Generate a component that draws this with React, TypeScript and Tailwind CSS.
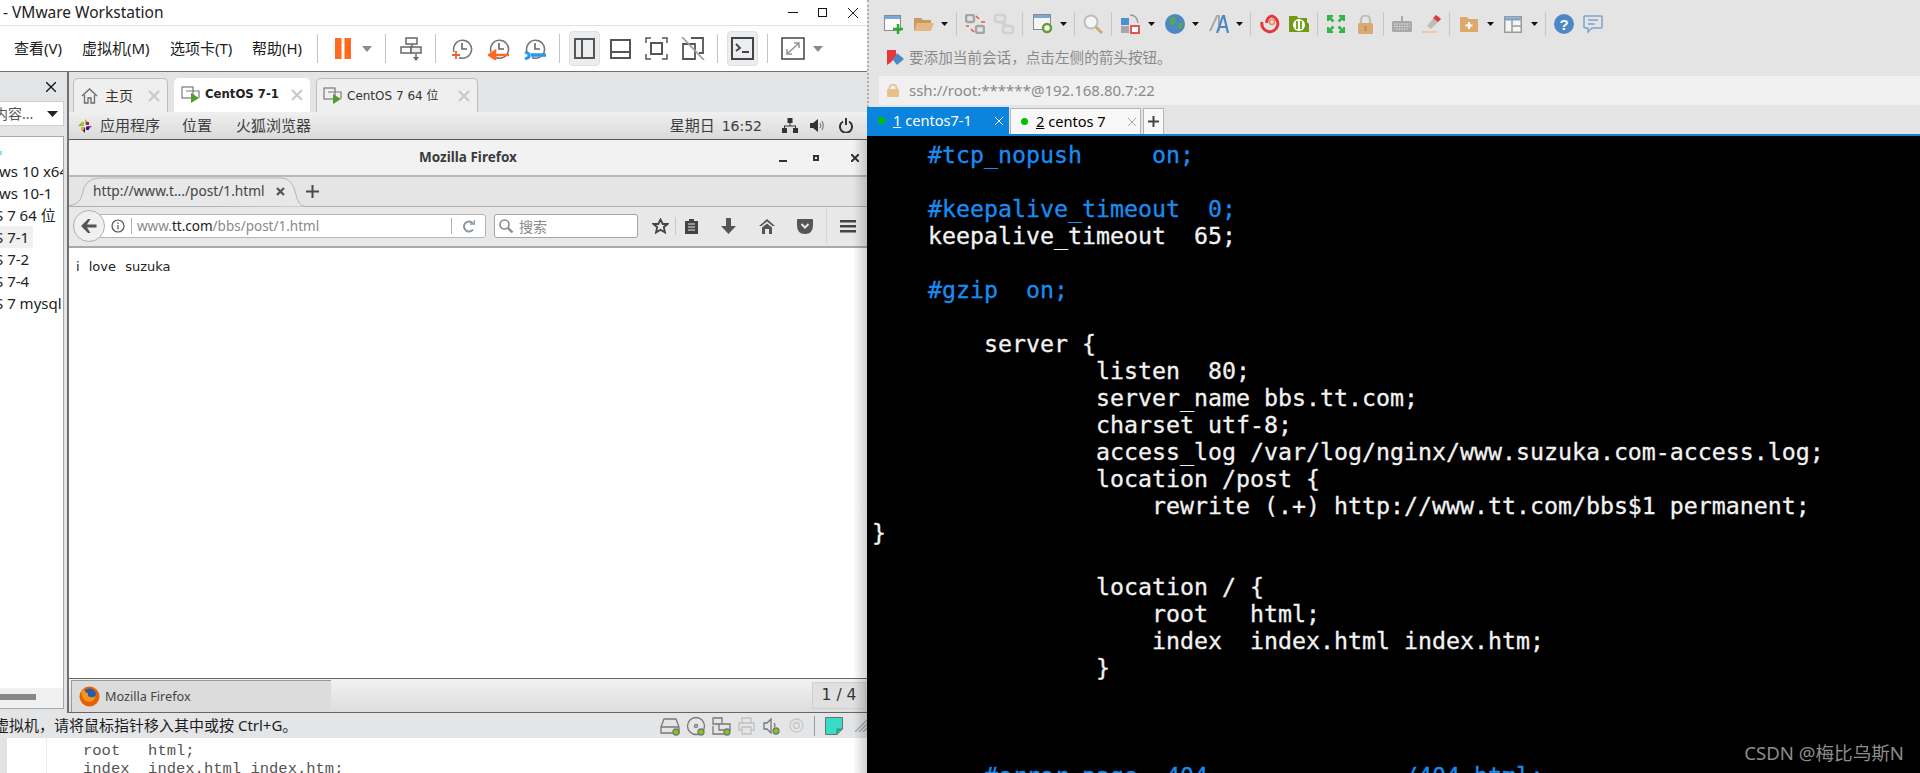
import React from "react";

const Sep = ({ c = "" }: { c?: string }) => <div className={`w-px h-[29px] bg-[#c4c4c4] shrink-0 ${c}`} />;
const RSep = ({ c = "" }: { c?: string }) => <div className={`w-px h-[24px] bg-[#c6c6c6] shrink-0 ${c}`} />;
const Caret = ({ c = "" }: { c?: string }) => (
  <svg width="10" height="6" className={`shrink-0 ${c}`}><path d="M0 0H10L5 6Z" fill="#8a8a8a" /></svg>
);
const DCaret = ({ c = "" }: { c?: string }) => (
  <svg width="7" height="4" className={`shrink-0 ${c}`}><path d="M0 0H7L3.5 4Z" fill="#111" /></svg>
);
const TabX = () => (
  <svg width="12" height="12" stroke="#c8c8c8" strokeWidth="2" className="shrink-0"><path d="M1 1L11 11M11 1L1 11" /></svg>
);
const Clock = ({ c = "", children }: { c?: string; children?: React.ReactNode }) => (
  <svg width="22" height="22" viewBox="0 0 22 22" fill="none" className={`shrink-0 ${c}`}>
    <path d="M3 14A9 9 0 1 1 8 19.500" stroke="#777" strokeWidth="1.6" />
    <path d="M11 5V11H16" stroke="#666" strokeWidth="1.6" />
    {children}
  </svg>
);
const Dot = ({ x, y }: { x: number; y: number }) => <circle cx={x} cy={y} r="3" fill="#7ccb0c" />;

const Code = [
  ["    ", "#tcp_nopush     on;"],
  [],
  ["    ", "#keepalive_timeout  0;"],
  ["    keepalive_timeout  65;"],
  [],
  ["    ", "#gzip  on;"],
  [],
  ["        server {"],
  ["                listen  80;"],
  ["                server_name bbs.tt.com;"],
  ["                charset utf-8;"],
  ["                access_log /var/log/nginx/www.suzuka.com-access.log;"],
  ["                location /post {"],
  ["                    rewrite (.+) http://www.tt.com/bbs$1 permanent;"],
  ["}"],
  [],
  ["                location / {"],
  ["                    root   html;"],
  ["                    index  index.html index.htm;"],
  ["                }"],
  [],
  [],
  [],
  ["        ", "#error_page  404              /404.html;"],
];

const tree = [
  { t: "ws 10 x64", m: "-ml-[1px]" },
  { t: "ws 10-1", m: "-ml-[1px]" },
  { t: "S 7 64 位", m: "-ml-[5px]" },
  { t: "S 7-1", m: "-ml-[5px]", active: true },
  { t: "S 7-2", m: "-ml-[5px]" },
  { t: "S 7-4", m: "-ml-[5px]" },
  { t: "S 7 mysql", m: "-ml-[5px]" },
];

function LeftToolbar() {
  return (
    <div className="h-[46px] border-b border-[#6f6f6f] flex items-center pl-[14px] bg-white text-[15px] text-[#1c1c1c] shrink-0">
      <div className="w-[68px]">查看(V)</div>
      <div className="w-[88px]">虚拟机(M)</div>
      <div className="w-[82px]">选项卡(T)</div>
      <div className="w-[65px]">帮助(H)</div>
      <Sep />
      <svg width="16" height="21" className="ml-[17px] shrink-0"><rect width="6.500" height="21" fill="#ff6a1f" /><rect x="9.500" width="6.500" height="21" fill="#ff6a1f" /></svg>
      <Caret c="ml-[11px]" />
      <Sep c="ml-[13px]" />
      <svg width="22" height="24" viewBox="0 0 22 24" fill="none" stroke="#666" strokeWidth="1.500" className="ml-[14px] shrink-0">
        <rect x="6" y="1" width="11" height="6" /><rect x="1" y="10" width="10" height="6" /><rect x="11" y="10" width="10" height="6" fill="#eee" />
        <path d="M12 7V10" /><path d="M16 17V21" /><path d="M13 20H19L16 24Z" fill="#666" stroke="none" />
      </svg>
      <Sep c="ml-[13px]" />
      <Clock c="ml-[15px]"><path d="M5 13V21M1 17H9" stroke="#f0622a" strokeWidth="1.800" /></Clock>
      <Clock c="ml-[15px]"><path d="M21 17H7M7 13L1 17L7 21Z" stroke="#ff6a1f" strokeWidth="2.500" fill="#ff6a1f" /></Clock>
      <Clock c="ml-[14px]"><path d="M22 17H7" stroke="#2a97e8" strokeWidth="3.500" /><path d="M1 14L5 16V19L1 21" stroke="#2a97e8" strokeWidth="3" /></Clock>
      <Sep c="ml-[13px]" />
      <div className="ml-[9px] w-[31px] h-[35px] bg-[#ecedef] border border-[#dfe0e2] rounded-[4px] flex items-center justify-center shrink-0">
        <svg width="21" height="21" fill="none" stroke="#555" strokeWidth="2"><rect x="1" y="1" width="19" height="19" /><path d="M8 1V20" /></svg>
      </div>
      <svg width="21" height="20" fill="none" stroke="#555" strokeWidth="2" className="ml-[10px] shrink-0"><rect x="1" y="1" width="19" height="18" /><path d="M1 13H20" /></svg>
      <svg width="23" height="23" fill="none" stroke="#555" strokeWidth="1.500" className="ml-[14px] shrink-0"><path d="M1 6V1H6M17 1H22V6M22 17V22H17M6 22H1V17" /><rect x="6" y="6" width="11" height="11" strokeWidth="2" /></svg>
      <svg width="24" height="23" fill="none" stroke="#555" strokeWidth="1.800" className="ml-[13px] shrink-0"><path d="M10 1H22V16H18M2 7H14V22H2Z" /><path d="M1 0L23 23" stroke="#9aa0a6" /></svg>
      <Sep c="ml-[12px]" />
      <div className="ml-[9px] w-[31px] h-[35px] bg-[#ecedef] border border-[#dfe0e2] rounded-[4px] flex items-center justify-center shrink-0">
        <svg width="23" height="23" fill="none" stroke="#444" strokeWidth="2"><rect x="1" y="1" width="21" height="21" /><path d="M5 7L9 11L5 14M11 15H18" strokeWidth="1.800" /></svg>
      </div>
      <Sep c="ml-[9px]" />
      <svg width="24" height="23" fill="none" stroke="#444" strokeWidth="1.500" className="ml-[13px] shrink-0"><rect x="1" y="1" width="22" height="21" /><path d="M6 17L18 6M13 6H18V11M6 12V17H11" stroke="#8a96a0" /></svg>
      <Caret c="ml-[8px]" />
    </div>
  );
}

function VmTabs() {
  return (
    <div className="h-[40px] bg-[#e3e4e6] pt-[6px] pl-[4px] flex shrink-0">
      <div className="w-[95px] h-[34px] rounded-t-[5px] border border-b-0 border-[#bdbdbd] bg-[#efefef] flex items-center pl-[7px]">
        <svg width="17" height="16" fill="none" stroke="#6b6b6b" strokeWidth="1.300" className="shrink-0"><path d="M1 8L8.500 1L16 8M3.500 7V15H7V10H10V15H13.500V7" /></svg>
        <span className="ml-[7px] text-[14px] text-[#333] w-[43px]">主页</span>
        <TabX />
      </div>
      <div className="ml-[6px] w-[136px] h-[34px] rounded-t-[5px] bg-white flex items-center pl-[7px]">
        <svg width="19" height="18" fill="none" stroke="#7b7b7b" strokeWidth="1.200" className="shrink-0"><rect x="1" y="1" width="11" height="11" /><path d="M5 5H18V12" /><path d="M10 7V17L18 12Z" fill="#4f9d2c" stroke="none" /></svg>
        <span className="ml-[5px] font-['DejaVu_Sans'] font-bold text-[11.7px] text-[#222] w-[86px] whitespace-nowrap">CentOS 7-1</span>
        <TabX />
      </div>
      <div className="ml-[6px] w-[162px] h-[34px] rounded-t-[5px] border border-b-0 border-[#bdbdbd] bg-[#efefef] flex items-center pl-[6px]">
        <svg width="19" height="18" fill="none" stroke="#7b7b7b" strokeWidth="1.200" className="shrink-0"><rect x="1" y="1" width="11" height="11" /><path d="M5 5H18V12" /><path d="M10 7V17L18 12Z" fill="#4f9d2c" stroke="none" /></svg>
        <span className="ml-[5px] font-['DejaVu_Sans','Noto_Sans_CJK_SC'] text-[12px] text-[#333] w-[111px] whitespace-nowrap">CentOS 7 64 位</span>
        <TabX />
      </div>
    </div>
  );
}

function GnomeBar() {
  return (
    <div className="h-[28px] border-b border-[#555] bg-gradient-to-b from-[#f0f0f0] to-[#dadada] flex items-center justify-between text-[15px] text-[#3d3d3d] shrink-0 pl-[9px] pr-[14px]">
      <div className="flex items-center">
        <svg width="14" height="14" viewBox="0 0 14 14">
          <path d="M7 0L10 3L7 6Z" fill="#c9a83a" /><path d="M14 7L11 10L8 7Z" fill="#8e3b8e" /><path d="M7 14L4 11L7 8Z" fill="#262577" /><path d="M0 7L3 4L6 7Z" fill="#8fb03c" />
          <rect x="3" y="3" width="3" height="3" fill="#9ccd2a" /><rect x="8" y="3" width="3" height="3" fill="#932279" /><rect x="3" y="8" width="3" height="3" fill="#efa724" /><rect x="8" y="8" width="3" height="3" fill="#262577" />
        </svg>
        <span className="ml-[8px] w-[82px]">应用程序</span>
        <span className="w-[54px]">位置</span>
        <span>火狐浏览器</span>
      </div>
      <div className="flex items-center">
        <span className="whitespace-nowrap">星期日 <span className="font-['DejaVu_Sans'] text-[14px] ml-[3px]">16:52</span></span>
        <svg width="16" height="15" viewBox="0 0 16 15" fill="#333" className="ml-[20px]"><rect x="5.500" width="5" height="5" /><rect y="10" width="5" height="5" /><rect x="11" y="10" width="5" height="5" /><path d="M7.500 5H8.500V7.500H14V10H13V8.500H3V10H2V7.500H7.500Z" /></svg>
        <svg width="15" height="15" viewBox="0 0 15 15" className="ml-[12px]"><path d="M0 5H3L8 1V14L3 10H0Z" fill="#333" /><path d="M10 5Q11.500 7.500 10 10M12 3Q14.500 7.500 12 12" stroke="#888" strokeWidth="1.300" fill="none" /></svg>
        <svg width="14" height="15" viewBox="0 0 14 15" fill="none" stroke="#333" strokeWidth="2" className="ml-[14px]"><path d="M4 3.500A6 6 0 1 0 10 3.500M7 0V7" /></svg>
      </div>
    </div>
  );
}

function FirefoxNav() {
  return (
    <div className="h-[41px] bg-[#e8e8e8] border-b-2 border-[#a9a9a9] flex items-center pb-[1px] shrink-0">
      <div className="relative z-10 ml-[4px] w-[32px] h-[32px] rounded-full bg-[#f0f0f0] border border-[#b0b0b0] flex items-center justify-center shrink-0">
        <svg width="16" height="14" viewBox="0 0 16 14" fill="#555"><path d="M7 0L9.500 0L6 5.500H15.500V8.500H6L9.500 14H7L0 7Z" /></svg>
      </div>
      <div className="-ml-[5px] w-[386px] h-[24px] bg-white border border-[#b5b5b5] rounded-r-[3px] flex items-center pl-[10px] pr-[10px] shrink-0">
        <svg width="14" height="14" fill="none" stroke="#555" strokeWidth="1.200" className="shrink-0"><circle cx="7" cy="7" r="6" /><path d="M7 6V10.500M7 3.500V5" /></svg>
        <div className="ml-[6px] w-px h-[16px] bg-[#b0b0b0]" />
        <span className="ml-[5px] font-['Noto_Sans'] text-[13.5px] text-[#8a8a8a] whitespace-nowrap">www.<span className="text-[#222]">tt.com</span>/bbs/post/1.html</span>
        <div className="ml-auto w-px h-[16px] bg-[#b0b0b0]" />
        <svg width="13" height="13" viewBox="0 0 13 13" fill="none" stroke="#8b98a3" strokeWidth="2" className="ml-[10px]"><path d="M11 3.500A5 5 0 1 0 11 9.500" /><path d="M8 4H12.500V0" strokeWidth="1.500" /></svg>
      </div>
      <div className="ml-[8px] w-[144px] h-[24px] bg-white border border-[#a5a5a5] rounded-[3px] flex items-center pl-[4px] shrink-0">
        <svg width="14" height="14" viewBox="0 0 14 14" fill="none" stroke="#8a8a8a" strokeWidth="1.600"><circle cx="5.500" cy="5.500" r="4.500" /><path d="M9 9L13.500 13.500" strokeWidth="2.300" /></svg>
        <span className="ml-[6px] text-[14px] text-[#8a8a8a]">搜索</span>
      </div>
      <svg width="17" height="16" viewBox="0 0 17 16" fill="none" stroke="#444" strokeWidth="1.800" className="ml-[14px] shrink-0"><path d="M8.500 1.500L10.700 6H15.500L11.800 9.200L13 14.500L8.500 11.700L4 14.500L5.200 9.200L1.500 6H6.300Z" /></svg>
      <div className="ml-[6px] w-px h-[18px] bg-[#c8c8c8] shrink-0" />
      <svg width="15" height="16" viewBox="0 0 15 16" className="ml-[8px] shrink-0"><path d="M1 3H5V1H10V3H14V16H1Z" fill="#444" /><path d="M4 6H11M4 9H11M4 12H11" stroke="#e8e8e8" strokeWidth="1.200" /></svg>
      <svg width="15" height="16" viewBox="0 0 15 16" fill="#555" className="ml-[22px] shrink-0"><path d="M5 0H10V8H15L7.500 16L0 8H5Z" /></svg>
      <svg width="16" height="15" viewBox="0 0 16 15" fill="#555" className="ml-[23px] shrink-0"><path d="M8 0L16 7H13.500L8 2.500L2.500 7H0Z" /><path d="M8 4.500L13 8.500V15H10V10H6V15H3V8.500Z" /></svg>
      <svg width="16" height="15" viewBox="0 0 16 15" className="ml-[22px] shrink-0"><path d="M1 0H15Q16 0 16 1V6Q16 15 8 15Q0 15 0 6V1Q0 0 1 0Z" fill="#555" /><path d="M4.500 5L8 8.500L11.500 5" stroke="#e8e8e8" strokeWidth="2" fill="none" /></svg>
      <div className="ml-[13px] w-px h-[34px] bg-[#d4d4d4] shrink-0" />
      <svg width="16" height="13" fill="#444" className="ml-[13px] shrink-0"><rect width="16" height="2.500" /><rect y="5" width="16" height="2.500" /><rect y="10" width="16" height="2.500" /></svg>
    </div>
  );
}

function StatusIcons() {
  return (
    <div className="ml-auto flex items-center shrink-0">
      <svg width="20" height="20" fill="none" stroke="#777" strokeWidth="1.300" className="shrink-0"><path d="M1 11L4 3H16L19 11V17H1ZM1 11H19" /><Dot x={16} y={16} /></svg>
      <svg width="20" height="20" fill="none" stroke="#777" strokeWidth="1.300" className="ml-[6px] shrink-0"><circle cx="10" cy="10" r="8.500" /><circle cx="10" cy="10" r="1.500" /><Dot x={15} y={16} /></svg>
      <svg width="19" height="20" fill="none" stroke="#777" strokeWidth="1.300" className="ml-[6px] shrink-0"><path d="M1 2H10V8H1ZM7 8H18V14H7ZM1 10V18H15" /><Dot x={15} y={16} /></svg>
      <svg width="17" height="18" fill="none" stroke="#c0c0c0" strokeWidth="1.300" className="ml-[7px] shrink-0"><path d="M4 6V1H13V6M4 13H1V6H16V13H13M4 10H13V17H4Z" /></svg>
      <svg width="17" height="18" fill="none" stroke="#777" strokeWidth="1.300" className="ml-[8px] shrink-0"><path d="M1 6H4L8 2V16L4 12H1ZM11 6Q13 9 11 10" /><Dot x={13} y={14} /></svg>
      <svg width="15" height="15" fill="none" stroke="#c8c8c8" strokeWidth="1.300" className="ml-[9px] shrink-0"><circle cx="7.500" cy="7.500" r="6.500" /><circle cx="7.500" cy="7.500" r="3" /></svg>
      <div className="ml-[10px] w-px h-[20px] bg-[#9a9a9a] shrink-0" />
      <svg width="18" height="18" className="ml-[10px] shrink-0"><path d="M.5.500H17.500V12L12 17.500H.5Z" fill="#39dcc6" stroke="#6f6f6f" /><path d="M17.500 12H12V17.500" fill="#2bb5a2" stroke="#6f6f6f" /></svg>
      <svg width="12" height="12" stroke="#9a9a9a" strokeWidth="1.100" className="ml-[12px] shrink-0"><path d="M0 12L12 0M4 12L12 4M8 12L12 8" /></svg>
    </div>
  );
}

function RightToolbar() {
  return (
    <div className="h-[48px] flex items-center">
      <svg width="20" height="20" fill="none" className="ml-[13px] shrink-0"><rect x=".5" y="1.500" width="16" height="15" stroke="#8a8a8a" fill="#fafafa" /><rect x="1" y="2" width="15" height="3" fill="#7aa7d8" /><path d="M14 10V20M9 15H19" stroke="#2ea836" strokeWidth="2.500" /></svg>
      <svg width="20" height="16" className="ml-[10px] shrink-0"><path d="M0 2H7L9 4H17V15H0Z" fill="#c89a60" /><path d="M3 7H20L17 15H0Z" fill="#e4b883" /></svg>
      <DCaret c="ml-[7px]" />
      <RSep c="ml-[8px]" />
      <svg width="20" height="20" fill="none" stroke="#a5a5a5" strokeWidth="2.500" className="ml-[8px] shrink-0"><rect x="1" y="1" width="8" height="7" rx="2" /><rect x="11" y="12" width="8" height="7" rx="2" /><path d="M11 2L14 5M16 8H20M9 18L6 15M1 12H4" stroke="#e0584f" strokeWidth="1.500" /></svg>
      <svg width="20" height="20" fill="none" stroke="#d0d0d0" strokeWidth="2.500" className="ml-[9px] shrink-0"><rect x="1" y="1" width="10" height="7" rx="2" /><rect x="9" y="12" width="10" height="7" rx="2" /><path d="M6 8L14 12" /></svg>
      <RSep c="ml-[8px]" />
      <svg width="20" height="20" fill="none" className="ml-[10px] shrink-0"><rect x=".5" y=".5" width="17" height="15" stroke="#8a8a8a" fill="#f5f5f5" /><rect x="1" y="1" width="16" height="3" fill="#7aa7d8" /><circle cx="14" cy="14" r="4" stroke="#5fa030" strokeWidth="2.500" fill="#fff" /></svg>
      <DCaret c="ml-[7px]" />
      <RSep c="ml-[7px]" />
      <svg width="20" height="20" fill="none" className="ml-[8px] shrink-0"><circle cx="8" cy="8" r="6.500" stroke="#bcbcbc" strokeWidth="2" fill="#f4f4f4" /><path d="M13 13L19 19" stroke="#d0a878" strokeWidth="3" /></svg>
      <RSep c="ml-[8px]" />
      <svg width="20" height="20" fill="none" className="ml-[9px] shrink-0"><rect y="4" width="8" height="7" fill="#4d8fd1" /><rect y="12" width="8" height="7" fill="#a6a6a6" /><rect x="10" y="12" width="8" height="7" fill="#fff" stroke="#e0584f" strokeWidth="2" /><path d="M9 1Q16 1 17 9" stroke="#999" strokeWidth="1.500" /></svg>
      <DCaret c="ml-[7px]" />
      <svg width="20" height="20" className="ml-[10px] shrink-0"><circle cx="10" cy="10" r="10" fill="#4d87c7" /><path d="M4 4L10 3L11 9L6 12ZM13 10L18 8L17 14L13 15Z" fill="#57a84a" /></svg>
      <DCaret c="ml-[7px]" />
      <svg width="20" height="20" fill="none" className="ml-[10px] shrink-0"><path d="M1 17L8 2H10V17" stroke="#a9a9a9" strokeWidth="2" /><path d="M8 19L14 2H15L19 19M10 13H18" stroke="#4d87c7" strokeWidth="2.200" /></svg>
      <DCaret c="ml-[7px]" />
      <RSep c="ml-[7px]" />
      <svg width="20" height="20" fill="none" className="ml-[9px] shrink-0"><path d="M2 8A8 8 0 1 0 12 2A6 6 0 0 0 7 9" stroke="#e5383b" strokeWidth="3" /><circle cx="12" cy="8" r="2.500" stroke="#f08a5d" strokeWidth="1.500" /></svg>
      <svg width="20" height="18" className="ml-[9px] shrink-0"><path d="M0 1H8L9 3H18V7L20 9V17H0Z" fill="#6f9a12" /><circle cx="10" cy="10" r="6" fill="#fff" /><path d="M8 6V14M12 6V14" stroke="#6f9a12" strokeWidth="1.800" /></svg>
      <RSep c="ml-[8px]" />
      <svg width="18" height="18" fill="none" stroke="#33b34a" strokeWidth="2.500" className="ml-[9px] shrink-0"><path d="M1 6V1H6M12 1H17V6M17 12V17H12M6 17H1V12M2 2L6.500 6.500M16 2L11.500 6.500M16 16L11.500 11.500M2 16L6.500 11.500" /></svg>
      <svg width="15" height="19" className="ml-[13px] shrink-0"><path d="M3 9V5A4.500 4.500 0 0 1 12 5V9" stroke="#bdbdbd" strokeWidth="2.200" fill="none" /><rect y="8" width="15" height="11" rx="1.500" fill="#d9aa72" /><rect x="6.500" y="11" width="2" height="5" fill="#b98d58" /></svg>
      <RSep c="ml-[10px]" />
      <svg width="20" height="16" className="ml-[8px] shrink-0"><path d="M10 0V5" stroke="#999" strokeWidth="1.500" /><rect y="5" width="20" height="11" rx="1.500" fill="#a8a8a8" /><path d="M2 8H18M2 10.500H18M4 13H16" stroke="#e4e4e4" strokeDasharray="1.500 1" /></svg>
      <svg width="20" height="20" className="ml-[9px] shrink-0"><path d="M15 1L20 5L10 15L6 12Z" fill="#bcbcbc" /><path d="M15 1L20 5L17 8L12 4Z" fill="#e5383b" /><path d="M1 18H16" stroke="#eccb9f" strokeWidth="2" /></svg>
      <RSep c="ml-[8px]" />
      <svg width="18" height="16" className="ml-[10px] shrink-0"><path d="M0 1H7L9 3H18V16H0Z" fill="#dba96a" /><path d="M9 6V13M5.500 9.500H12.500" stroke="#fff" strokeWidth="2.200" /></svg>
      <DCaret c="ml-[9px]" />
      <svg width="18" height="17" fill="none" stroke="#9a9a9a" strokeWidth="1.500" className="ml-[10px] shrink-0"><rect x=".75" y=".75" width="16.500" height="15.500" fill="#f5f5f5" /><path d="M1 3H17" stroke="#7aa7d8" strokeWidth="3" /><path d="M8 4V16M8 10H17" /></svg>
      <DCaret c="ml-[9px]" />
      <RSep c="ml-[7px]" />
      <svg width="20" height="20" className="ml-[8px] shrink-0"><circle cx="10" cy="10" r="10" fill="#4d87c7" /><text x="10" y="15.500" textAnchor="middle" fontSize="15" fontWeight="700" fill="#fff" fontFamily="Liberation Sans">?</text></svg>
      <svg width="20" height="19" fill="none" stroke="#7ba3cc" strokeWidth="1.500" className="ml-[9px] shrink-0"><path d="M2 1H18Q19 1 19 2V12Q19 13 18 13H9L5 17V13H2Q1 13 1 12V2Q1 1 2 1Z" /><path d="M5 5H15M5 9H12" /></svg>
    </div>
  );
}

export default function App() {
  return (
    <div className="w-[1920px] h-[773px] flex overflow-hidden bg-white font-['Noto_Sans','Noto_Sans_CJK_SC',sans-serif] relative">
      <div className="w-[867px] shrink-0 flex flex-col relative">
        <div className="h-[26px] border-b border-[#e2e2e2] flex items-center pl-[3px] shrink-0">
          <span className="text-[15.5px] text-[#222] whitespace-nowrap">- VMware Workstation</span>
          <div className="ml-auto flex items-center pr-[9px]">
            <div className="w-[10px] h-px bg-[#111]" />
            <div className="ml-[20px] w-[9px] h-[9px] border border-[#111]" />
            <svg width="10" height="10" stroke="#222" className="ml-[21px]"><path d="M0 0L10 10M10 0L0 10" /></svg>
          </div>
        </div>
        <LeftToolbar />
        <div className="flex h-[641px] shrink-0">
          <div className="w-[69px] shrink-0 bg-[#e3e4e6] border-r-2 border-[#707070] flex flex-col pr-[3px]">
            <div className="h-[29px] flex items-center justify-end pr-[8px]">
              <svg width="10" height="10" stroke="#111" strokeWidth="1.300"><path d="M0 0L10 10M10 0L0 10" /></svg>
            </div>
            <div className="h-[25px] bg-white border border-l-0 border-[#cfcfcf] flex items-center overflow-hidden text-[14px] text-[#555] whitespace-nowrap">
              <span className="-ml-[6px]">内容...</span>
              <svg width="11" height="6" className="ml-auto mr-[5px] shrink-0"><path d="M0 0H11L5.500 6Z" fill="#222" /></svg>
            </div>
            <div className="mt-[10px] flex-1 mb-[4px] bg-white border border-l-0 border-[#a8a8a8] flex flex-col overflow-hidden">
              <div className="w-[2px] h-[4px] bg-[#7fe7f2] mt-[14px] mb-[5px]" />
              {tree.map((r) => (
                <div key={r.t} className={`h-[22px] flex items-center whitespace-nowrap text-[15px] text-[#222] ${r.active ? "w-[33px] bg-[#f0f0f0]" : ""}`}>
                  <span className={r.m}>{r.t}</span>
                </div>
              ))}
              <div className="mt-auto h-[20px] bg-[#f0f0f0] flex items-center pb-[3px]">
                <div className="w-[36px] h-[6px] bg-[#888]" />
              </div>
            </div>
          </div>
          <div className="flex-1 min-w-0 flex flex-col">
            <VmTabs />
            <GnomeBar />
            <div className="h-[37px] bg-[#f2f2f2] border-b-2 border-[#b8b8b8] grid grid-cols-[1fr_auto_1fr] items-center shrink-0">
              <div />
              <div className="text-[13.5px] font-bold text-[#3b3b3b] whitespace-nowrap">Mozilla Firefox</div>
              <div className="flex items-center justify-end pr-[8px]">
                <div className="w-[8px] h-[2px] bg-[#333] mt-[6px]" />
                <div className="ml-[26px] w-[6px] h-[6px] border-2 border-[#333]" />
                <svg width="8" height="8" stroke="#333" strokeWidth="2" className="ml-[32px]"><path d="M0 0L8 8M8 0L0 8" /></svg>
              </div>
            </div>
            <div className="h-[30px] bg-[#e5e5e5] border-b border-[#b0b0b0] flex items-center relative shrink-0">
              <svg width="240" height="30" className="absolute left-0 top-0" fill="#e8e8e8" stroke="#b5b5b5"><path d="M0 28.500Q11 28 13 18Q16 1 30 1H212Q224 1 227 18Q229 28 236 29.500" /></svg>
              <span className="relative ml-[24px] w-[183px] text-[13.7px] font-['Noto_Sans'] text-[#444] whitespace-nowrap">http://www.t.../post/1.html</span>
              <svg width="9" height="9" stroke="#555" strokeWidth="2.200" className="relative"><path d="M1 1L8 8M8 1L1 8" /></svg>
              <svg width="13" height="13" stroke="#4a4a4a" strokeWidth="2" className="relative ml-[21px]"><path d="M6.500 0V13M0 6.500H13" /></svg>
            </div>
            <FirefoxNav />
            <div className="flex-1 bg-white pl-[7px] pt-[11px] min-h-0">
              <div className="font-['DejaVu_Sans'] text-[13px] leading-[16px] text-[#222] [word-spacing:5px]">i love suzuka</div>
            </div>
            <div className="h-[35px] border-y border-[#666] bg-gradient-to-b from-[#f2f2f2] to-[#dddddd] flex items-end pl-[2px] pr-px shrink-0">
              <div className="w-[260px] h-[32px] bg-[#dcdcdc] border-l border-t border-[#9a9a9a] flex items-center pl-[7px]">
                <svg width="21" height="21" viewBox="0 0 21 21"><circle cx="10.500" cy="10.500" r="10" fill="#e66000" /><circle cx="10.500" cy="9" r="6.500" fill="#1f5fa8" /><path d="M2 5Q3 15 10 16Q16 16 17 9Q15 12 11 11Q8 10 9 7Q6 7 5 3Z" fill="#f7941d" /></svg>
                <span className="ml-[5px] text-[12.7px] text-[#444] whitespace-nowrap">Mozilla Firefox</span>
              </div>
              <div className="ml-auto mb-[3px] w-[54px] h-[27px] bg-[#e0e0e0] border border-[#d0d0d0] flex items-center justify-center font-['DejaVu_Sans'] text-[15.5px] text-[#333] whitespace-nowrap">1 / 4</div>
            </div>
          </div>
        </div>
        <div className="h-[25px] bg-[#e4e5e7] flex items-center text-[15px] text-[#1c1c1c] whitespace-nowrap shrink-0 overflow-hidden">
          <span className="-ml-[6px]">虚拟机，请将鼠标指针移入其中或按 Ctrl+G。</span>
          <StatusIcons />
        </div>
        <div className="flex-1 min-h-0 flex bg-white overflow-hidden">
          <div className="w-[7px] bg-[#e2e2e2] shrink-0" />
          <div className="w-[40px] border-r border-[#ececec] shrink-0" />
          <pre className="pl-[36px] pt-[4px] font-['Liberation_Mono',monospace] text-[15.5px] leading-[18px] text-[#555]">{"root   html;\nindex  index.html index.htm;"}</pre>
        </div>
        <div className="absolute right-0 top-[140px] bottom-0 w-[14px] bg-gradient-to-r from-transparent to-[#0000002e]" />
      </div>
      <div className="w-[1053px] shrink-0 flex flex-col">
        <div className="bg-[#e4e4e4] flex h-[107px] shrink-0">
          <div className="w-[4px] border-l-2 border-dotted border-[#b0b0b0] shrink-0" />
          <div className="flex-1 min-w-0 flex flex-col">
            <RightToolbar />
            <div className="h-[19px] flex items-center pl-[16px]">
              <svg width="17" height="16" viewBox="0 0 17 16"><path d="M0 0H9V7L3 13L0 15Z" fill="#e5383b" /><path d="M10 3L17 9L10 15L6 10Z" fill="#4d87c7" /></svg>
              <span className="ml-[5px] text-[14.6px] text-[#8a8a8a] whitespace-nowrap">要添加当前会话，点击左侧的箭头按钮。</span>
            </div>
            <div className="mt-[9px] ml-[8px] h-[29px] bg-[#f0f0f0] flex items-center pl-[8px]">
              <svg width="12" height="13" viewBox="0 0 12 13"><path d="M2.500 6V4A3.500 3.500 0 0 1 9.500 4V6" stroke="#e3c08f" strokeWidth="1.800" fill="none" /><rect y="5" width="12" height="8" rx="1" fill="#e8c08c" /></svg>
              <span className="ml-[10px] text-[15px] text-[#8a8a8a] whitespace-nowrap">ssh://root:******@192.168.80.7:22</span>
            </div>
          </div>
        </div>
        <div className="h-[29px] bg-[#e4e4e4] border-b-2 border-[#0a84dc] flex shrink-0 text-[14.6px]">
          <div className="w-[142px] bg-[#0a84dc] flex items-center text-white pl-[11px]">
            <span className="w-[7px] h-[7px] rounded-full bg-[#00c000] shrink-0" />
            <span className="ml-[8px] w-[102px] whitespace-nowrap"><span className="underline">1</span> centos7-1</span>
            <svg width="8" height="8" stroke="#fff"><path d="M0 0L8 8M8 0L0 8" /></svg>
          </div>
          <div className="ml-px w-[131px] mt-px bg-[#f8f8f8] border border-b-0 border-[#b5b5b5] flex items-center text-black pl-[10px]">
            <span className="w-[7px] h-[7px] rounded-full bg-[#00c000] shrink-0" />
            <span className="ml-[8px] w-[92px] whitespace-nowrap"><span className="underline">2</span> centos 7</span>
            <svg width="8" height="8" stroke="#aaa"><path d="M0 0L8 8M8 0L0 8" /></svg>
          </div>
          <div className="ml-[2px] w-[21px] mt-px bg-[#f8f8f8] border border-b-0 border-[#b5b5b5] flex items-center justify-center">
            <svg width="11" height="11" stroke="#444" strokeWidth="2"><path d="M5.500 0V11M0 5.500H11" /></svg>
          </div>
        </div>
        <div className="flex-1 min-h-0 bg-black overflow-hidden pl-[5px] pt-[5px] relative">
          <pre className="font-['DejaVu_Sans_Mono',monospace] text-[23.25px] leading-[27px] text-[#f2f2f2] [-webkit-text-stroke:0.3px_currentColor]">
            {Code.map((l, i) => (
              <div key={i} className="h-[27px]">
                {l[0]}
                {l[1] ? <span className="text-[#1a8cf0]">{l[1]}</span> : null}
              </div>
            ))}
          </pre>
          <div className="absolute right-[16px] bottom-[7px] text-[18.6px] leading-[26px] text-[#8c8c8c] whitespace-nowrap">CSDN @梅比乌斯N</div>
        </div>
      </div>
    </div>
  );
}
